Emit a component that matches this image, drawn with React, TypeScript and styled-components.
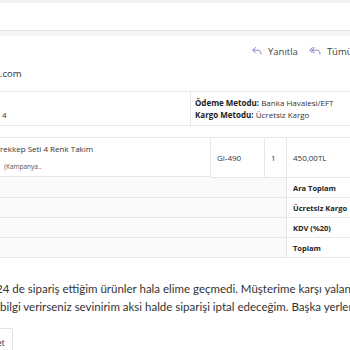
import React from 'react'
import styled, { createGlobalStyle } from 'styled-components'

const Global = createGlobalStyle`
  html, body { margin: 0; padding: 0; background: #fff; }
  body { width: 350px; height: 350px; overflow: hidden; }
`

const Page = styled.div`
  width: 350px;
  height: 350px;
  overflow: hidden;
  font-family: 'Open Sans', 'Noto Sans', sans-serif;
  color: #333;
`
const TopBar = styled.div`
  height: 27px;
  background: #fff;
  border-top: 3px solid #f1f1f1;
  box-shadow: 0 1px 2px rgba(0, 0, 0, 0.18);
  border-bottom: 1px solid #e2e2e2;
`
const TopBand = styled.div`
  height: 5px;
  background: #f4f4f4;
`
const Actions = styled.div`
  display: flex;
  align-items: center;
  gap: 11px;
  padding-left: 250px;
  height: 30px;
  white-space: nowrap;
`
const Action = styled.span`
  display: flex;
  align-items: center;
  gap: 6px;
  font-size: 9.5px;
  color: #444;
`
const Sender = styled.div`
  font-size: 9.5px;
  color: #333;
  height: 14px;
  line-height: 14px;
  margin-top: 1px;
`
const InfoTable = styled.div`
  margin-top: 10px;
  display: grid;
  grid-template-columns: 190px 1fr;
  height: 33px;
  border-top: 1px solid #e6e6e6;
  border-bottom: 1px solid #e6e6e6;
  font-size: 8px;
  color: #333;
`
const InfoCell = styled.div<{ $divider?: boolean }>`
  display: flex;
  flex-direction: column;
  justify-content: center;
  gap: 1px;
  padding-left: ${p => (p.$divider ? '4px' : '2px')};
  border-left: ${p => (p.$divider ? '1px solid #e6e6e6' : 'none')};
  white-space: nowrap;
`
const Bold = styled.b`
  font-weight: 700;
  color: #222;
`
const OrderTable = styled.div`
  margin-top: 11px;
  display: grid;
  grid-template-columns: 210px 54px 22px 1fr;
  font-size: 8px;
  color: #333;
  border-top: 1px solid #e6e6e6;
`
const Cell = styled.div<{ $shade?: boolean; $line?: boolean; $bold?: boolean; $span?: number }>`
  grid-column: ${p => (p.$span ? `span ${p.$span}` : 'auto')};
  display: flex;
  align-items: center;
  padding-left: 6px;
  border-bottom: 1px solid #e6e6e6;
  border-left: ${p => (p.$line ? '1px solid #e6e6e6' : 'none')};
  background: ${p => (p.$shade ? '#fafafa' : '#fff')};
  font-weight: ${p => (p.$bold ? 700 : 400)};
  font-size: ${p => (p.$bold ? '7.5px' : '8px')};
  color: ${p => (p.$bold ? '#222' : '#333')};
  white-space: nowrap;
  height: 19px;
`
const ProductCell = styled.div`
  display: flex;
  flex-direction: column;
  justify-content: space-between;
  height: 39px;
  padding: 5px 0 5px 0;
  box-sizing: border-box;
  border-bottom: 1px solid #e6e6e6;
  white-space: nowrap;
`
const Small = styled.span`
  font-size: 6.5px;
  padding-left: 4px;
  color: #555;
`
const ItemCell = styled(Cell)`
  height: 39px;
`
const Message = styled.p`
  margin: 22px 0 0 0;
  font-family: Lato, 'Open Sans', sans-serif;
  font-size: 11.5px;
  line-height: 18px;
  color: #333;
  white-space: nowrap;
  text-indent: -4px;
`
const ForwardButton = styled.button`
  margin-top: 12px;
  margin-left: -20px;
  height: 28px;
  width: 33px;
  border: 1px solid #e3e3e3;
  border-radius: 2px;
  background: #fff;
  font-family: 'Open Sans', sans-serif;
  font-size: 9.5px;
  color: #333;
  text-align: right;
  padding: 0 7px 0 0;
`

const ReplyIcon = ({ double }: { double?: boolean }) => (
  <svg width="12" height="10" viewBox="0 0 12 10" fill="none" stroke="#8f7fc4" strokeWidth="1" strokeLinecap="round" strokeLinejoin="round">
    {double && <path d="M3.5 1.5 L0.8 4.2 L3.5 6.9" />}
    <path d="M5.5 1.5 L2.8 4.2 L5.5 6.9" />
    <path d="M2.8 4.2 H7.5 Q11 4.2 11 8" />
  </svg>
)

export default function App() {
  return (
    <Page>
      <Global />
      <TopBar />
      <TopBand />
      <Actions>
        <Action>
          <ReplyIcon />
          Yanıtla
        </Action>
        <Action>
          <ReplyIcon double />
          Tümünü Yanıtla
        </Action>
      </Actions>
      <Sender>.com</Sender>
      <InfoTable>
        <InfoCell>
          <span>&nbsp;</span>
          <span>4</span>
        </InfoCell>
        <InfoCell $divider>
          <span><Bold>Ödeme Metodu:</Bold> Banka Havalesi/EFT</span>
          <span><Bold>Kargo Metodu:</Bold> Ücretsiz Kargo</span>
        </InfoCell>
      </InfoTable>
      <OrderTable>
        <ProductCell>
          <span>rekkep Seti 4 Renk Takım</span>
          <Small>(Kampanya..</Small>
        </ProductCell>
        <ItemCell $line>Gl-490</ItemCell>
        <ItemCell $line>1</ItemCell>
        <ItemCell $line>450,00TL</ItemCell>
        <Cell $shade $span={3} />
        <Cell $line $bold>Ara Toplam</Cell>
        <Cell $shade $span={3} />
        <Cell $line $bold>Ücretsiz Kargo</Cell>
        <Cell $shade $span={3} />
        <Cell $line $bold>KDV (%20)</Cell>
        <Cell $shade $span={3} />
        <Cell $line $bold>Toplam</Cell>
      </OrderTable>
      <Message>
        24 de sipariş ettiğim ürünler hala elime geçmedi. Müşterime karşı yalancı duruma düştüm.
        <br />
        bilgi verirseniz sevinirim aksi halde siparişi iptal edeceğim. Başka yerlerden
      </Message>
      <ForwardButton>İlet</ForwardButton>
    </Page>
  )
}
